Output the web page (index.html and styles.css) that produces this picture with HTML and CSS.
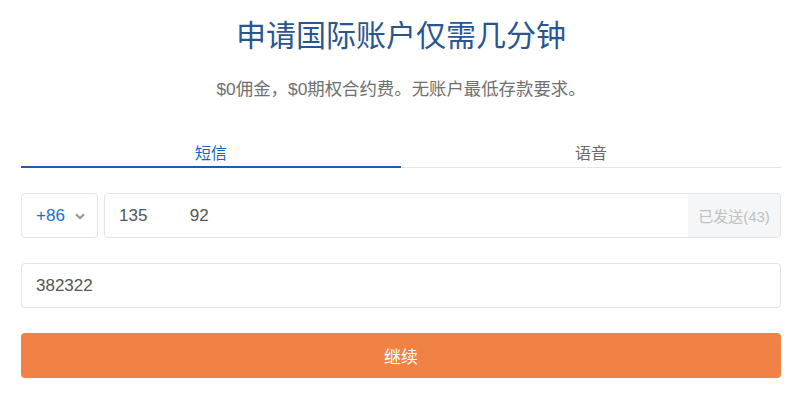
FILE: index.html
```html
<!DOCTYPE html>
<html lang="zh-CN">
<head>
<meta charset="utf-8">
<link rel="stylesheet" href="styles.css">
</head>
<body>
<div class="page">
  <h1 class="title">申请国际账户仅需几分钟</h1>
  <p class="subtitle">$0佣金，$0期权合约费。无账户最低存款要求。</p>
  <div class="tabs">
    <div class="tab active">短信</div>
    <div class="tab">语音</div>
  </div>
  <div class="row">
    <div class="country">
      <span class="code">+86</span>
      <svg class="chev" width="10" height="7" viewBox="0 0 10 7"><path d="M1 1.2 L5 5.2 L9 1.2" fill="none" stroke="#999" stroke-width="2.2"/></svg>
    </div>
    <div class="phone">
      <span class="num">135&nbsp;&nbsp;&nbsp;&nbsp;&nbsp;&nbsp;&nbsp;&nbsp;&nbsp;92</span>
      <span class="sent">已发送(43)</span>
    </div>
  </div>
  <div class="field">382322</div>
  <button class="submit">继续</button>
</div>
</body>
</html>
```
FILE: styles.css
```css
* { box-sizing: border-box; }
html, body { margin: 0; padding: 0; background: #fff; }
body {
  font-family: "Liberation Sans", "Noto Sans CJK SC", Arial, sans-serif;
  color: #555;
}
.page {
  width: 803px;
  padding: 0 22px 0 21px;
}
.title {
  margin: 0;
  padding-top: 15px;
  height: 58px;
  font-size: 30px;
  line-height: 42px;
  font-weight: normal;
  text-align: center;
  color: #2b5591;
}
.subtitle {
  margin: 0;
  padding-top: 19px;
  height: 89px;
  font-size: 17.4px;
  line-height: 24px;
  color: #707070;
  text-align: center;
}
.tabs {
  display: flex;
  border-bottom: 1px solid #e5e5e5;
  height: 25px;
  margin-top: -4px;
}
.tab {
  flex: 1;
  text-align: center;
  font-size: 16px;
  line-height: 22px;
  color: #6a6a6a;
}
.tab.active {
  color: #1565c0;
  border-bottom: 2px solid #1a5fb4;
  margin-bottom: -1px;
}
.row {
  display: flex;
  gap: 6px;
  margin-top: 25px;
  height: 45px;
}
.country {
  width: 77px;
  border: 1px solid #e4e4e4;
  border-radius: 4px;
  display: flex;
  align-items: center;
  padding-left: 14px;
  gap: 10px;
}
.code {
  font-size: 17px;
  color: #1a6fce;
}
.chev { margin-top: 1px; }
.phone {
  flex: 1;
  border: 1px solid #e4e4e4;
  border-radius: 4px;
  display: flex;
  align-items: center;
  overflow: hidden;
}
.num {
  flex: 1;
  padding-left: 14px;
  font-size: 17px;
  color: #555;
}
.sent {
  align-self: stretch;
  width: 92px;
  background: #f5f6f8;
  display: flex;
  align-items: center;
  justify-content: center;
  font-size: 15px;
  color: #c0c0c0;
}
.field {
  margin-top: 25px;
  height: 45px;
  border: 1px solid #e4e4e4;
  border-radius: 4px;
  padding-left: 14px;
  display: flex;
  align-items: center;
  font-size: 17px;
  color: #555;
}
.submit {
  display: block;
  width: 100%;
  margin-top: 25px;
  height: 45px;
  border: none;
  border-radius: 4px;
  background: #f08245;
  color: #fff;
  font-family: "Liberation Sans", "Noto Sans CJK SC", sans-serif;
  font-size: 17px;
  padding: 0;
}
```
